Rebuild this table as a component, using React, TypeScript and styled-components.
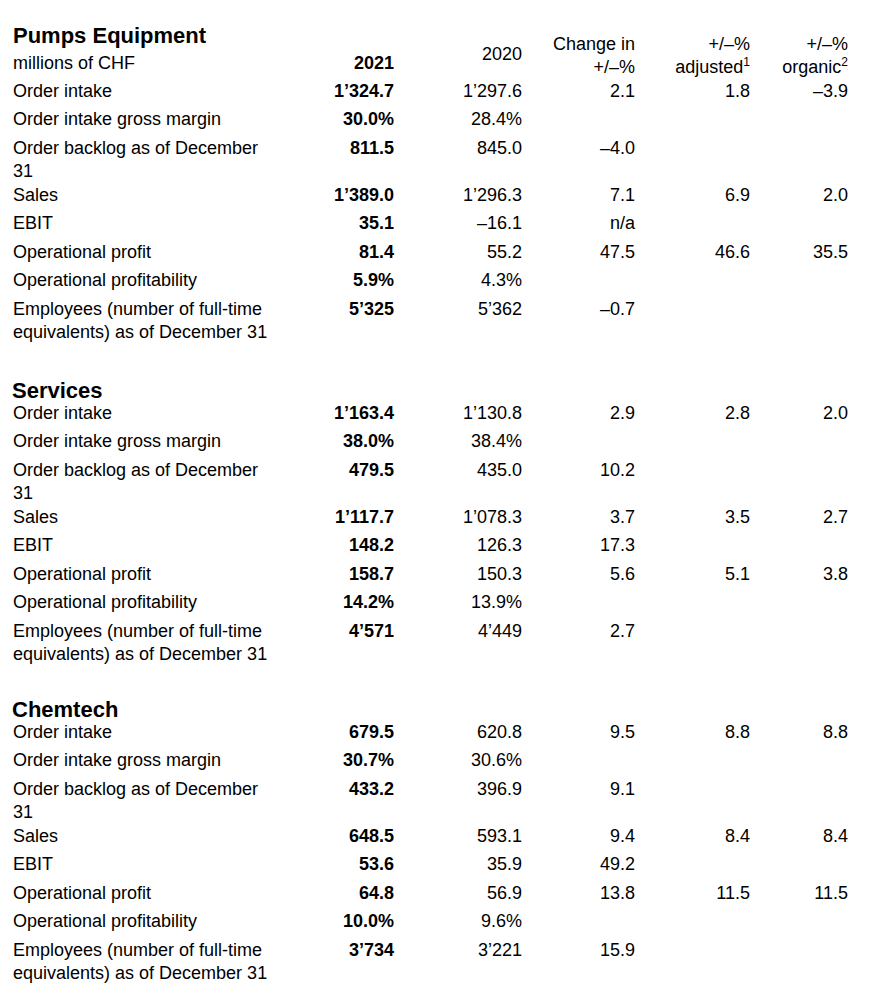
import React from 'react';
import styled, { createGlobalStyle } from 'styled-components';

type Row = {
  label: string;
  y2021: string;
  y2020: string;
  change?: string;
  adjusted?: string;
  organic?: string;
};

type Section = {
  title: string;
  gap: number;
  rows: Row[];
};

const SECTIONS: Section[] = [
  {
    title: 'Pumps Equipment',
    gap: 0,
    rows: [
      { label: 'Order intake', y2021: '1’324.7', y2020: '1’297.6', change: '2.1', adjusted: '1.8', organic: '–3.9' },
      { label: 'Order intake gross margin', y2021: '30.0%', y2020: '28.4%' },
      { label: 'Order backlog as of December 31', y2021: '811.5', y2020: '845.0', change: '–4.0' },
      { label: 'Sales', y2021: '1’389.0', y2020: '1’296.3', change: '7.1', adjusted: '6.9', organic: '2.0' },
      { label: 'EBIT', y2021: '35.1', y2020: '–16.1', change: 'n/a' },
      { label: 'Operational profit', y2021: '81.4', y2020: '55.2', change: '47.5', adjusted: '46.6', organic: '35.5' },
      { label: 'Operational profitability', y2021: '5.9%', y2020: '4.3%' },
      { label: 'Employees (number of full-time equivalents) as of December 31', y2021: '5’325', y2020: '5’362', change: '–0.7' },
    ],
  },
  {
    title: 'Services',
    gap: 35,
    rows: [
      { label: 'Order intake', y2021: '1’163.4', y2020: '1’130.8', change: '2.9', adjusted: '2.8', organic: '2.0' },
      { label: 'Order intake gross margin', y2021: '38.0%', y2020: '38.4%' },
      { label: 'Order backlog as of December 31', y2021: '479.5', y2020: '435.0', change: '10.2' },
      { label: 'Sales', y2021: '1’117.7', y2020: '1’078.3', change: '3.7', adjusted: '3.5', organic: '2.7' },
      { label: 'EBIT', y2021: '148.2', y2020: '126.3', change: '17.3' },
      { label: 'Operational profit', y2021: '158.7', y2020: '150.3', change: '5.6', adjusted: '5.1', organic: '3.8' },
      { label: 'Operational profitability', y2021: '14.2%', y2020: '13.9%' },
      { label: 'Employees (number of full-time equivalents) as of December 31', y2021: '4’571', y2020: '4’449', change: '2.7' },
    ],
  },
  {
    title: 'Chemtech',
    gap: 32,
    rows: [
      { label: 'Order intake', y2021: '679.5', y2020: '620.8', change: '9.5', adjusted: '8.8', organic: '8.8' },
      { label: 'Order intake gross margin', y2021: '30.7%', y2020: '30.6%' },
      { label: 'Order backlog as of December 31', y2021: '433.2', y2020: '396.9', change: '9.1' },
      { label: 'Sales', y2021: '648.5', y2020: '593.1', change: '9.4', adjusted: '8.4', organic: '8.4' },
      { label: 'EBIT', y2021: '53.6', y2020: '35.9', change: '49.2' },
      { label: 'Operational profit', y2021: '64.8', y2020: '56.9', change: '13.8', adjusted: '11.5', organic: '11.5' },
      { label: 'Operational profitability', y2021: '10.0%', y2020: '9.6%' },
      { label: 'Employees (number of full-time equivalents) as of December 31', y2021: '3’734', y2020: '3’221', change: '15.9' },
    ],
  },
];

const GlobalStyle = createGlobalStyle`
  html, body {
    margin: 0;
    padding: 0;
    background: #ffffff;
  }
  body {
    font-family: 'Liberation Sans', Arial, sans-serif;
    color: #000000;
  }
`;

const COLUMNS = '262px 119px 128px 113px 115px 98px';

const Page = styled.div`
  width: 881px;
  padding: 22px 0 0 13px;
  box-sizing: border-box;
  font-size: 18px;
`;

const HeaderGrid = styled.div`
  display: grid;
  grid-template-columns: ${COLUMNS};
`;

const LabelHead = styled.div`
  display: flex;
  flex-direction: column;
  padding-bottom: 4px;
`;

const MainTitle = styled.h2`
  margin: 0;
  font-size: 22px;
  font-weight: 700;
  line-height: 28px;
`;

const Unit = styled.div`
  margin-top: 2px;
  line-height: 23.5px;
`;

const HeadCell = styled.div<{ $bold?: boolean; $lift?: number }>`
  align-self: end;
  text-align: right;
  line-height: 23.5px;
  font-weight: ${(p) => (p.$bold ? 700 : 400)};
  padding-bottom: ${(p) => p.$lift ?? 0}px;
  & > sup {
    font-size: 12px;
    line-height: 0;
    vertical-align: 7px;
  }
`;

const SectionBlock = styled.section<{ $gap: number }>`
  margin-top: ${(p) => p.$gap}px;
`;

const SectionTitle = styled.h3`
  margin: 0 0 0 -1px;
  font-size: 22px;
  font-weight: 700;
  line-height: 22px;
`;

const RowGrid = styled.div`
  display: grid;
  grid-template-columns: ${COLUMNS};
  min-height: 28.5px;
  line-height: 23.5px;
  align-items: start;
`;

const Label = styled.div`
  padding-right: 4px;
`;

const Num = styled.div<{ $bold?: boolean }>`
  text-align: right;
  font-weight: ${(p) => (p.$bold ? 700 : 400)};
`;

const DataRow = ({ row }: { row: Row }) => (
  <RowGrid>
    <Label>{row.label}</Label>
    <Num $bold>{row.y2021}</Num>
    <Num>{row.y2020}</Num>
    <Num>{row.change}</Num>
    <Num>{row.adjusted}</Num>
    <Num>{row.organic}</Num>
  </RowGrid>
);

export default function App() {
  const [first, ...rest] = SECTIONS;
  return (
    <Page>
      <GlobalStyle />
      <HeaderGrid>
        <LabelHead>
          <MainTitle>{first.title}</MainTitle>
          <Unit>millions of CHF</Unit>
        </LabelHead>
        <HeadCell $bold $lift={4}>2021</HeadCell>
        <HeadCell $lift={13}>2020</HeadCell>
        <HeadCell>
          Change in
          <br />
          +/–%
        </HeadCell>
        <HeadCell>
          +/–%
          <br />
          adjusted<sup>1</sup>
        </HeadCell>
        <HeadCell>
          +/–%
          <br />
          organic<sup>2</sup>
        </HeadCell>
      </HeaderGrid>
      {first.rows.map((r) => (
        <DataRow key={r.label} row={r} />
      ))}
      {rest.map((s) => (
        <SectionBlock key={s.title} $gap={s.gap}>
          <SectionTitle>{s.title}</SectionTitle>
          {s.rows.map((r) => (
            <DataRow key={r.label} row={r} />
          ))}
        </SectionBlock>
      ))}
    </Page>
  );
}
